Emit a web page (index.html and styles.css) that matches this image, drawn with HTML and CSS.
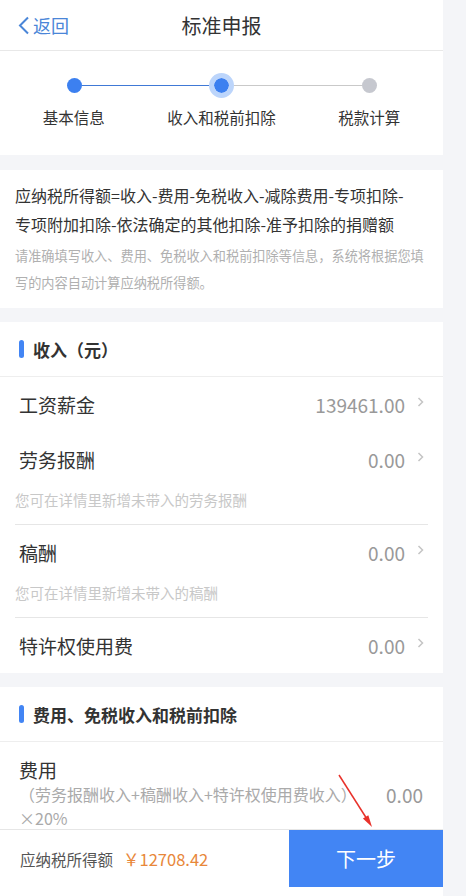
FILE: index.html
```html
<!DOCTYPE html>
<html lang="zh-CN">
<head>
  <meta charset="UTF-8" />
  <meta name="viewport" content="width=device-width, initial-scale=1.0" />
  <title>标准申报</title>
  <link rel="stylesheet" href="styles.css">
</head>
<body>
  <div class="page">
    <div class="header">
      <a class="back" href="#">
        <svg width="13" height="19" viewBox="0 0 13 19"><polyline points="11,1.5 3,9.5 11,17.5" fill="none" stroke="#4a86d8" stroke-width="2"/></svg>
        返回
      </a>
      <div class="title">标准申报</div>
      <div></div>
    </div>

    <div class="steps">
      <div class="track">
        <span class="dot done"></span>
        <span class="line done"></span>
        <span class="dot active"></span>
        <span class="line"></span>
        <span class="dot"></span>
      </div>
      <div class="labels">
        <div>基本信息</div>
        <div>收入和税前扣除</div>
        <div>税款计算</div>
      </div>
    </div>

    <div class="card intro">
      <div class="formula">应纳税所得额=收入-费用-免税收入-减除费用-专项扣除-<br>专项附加扣除-依法确定的其他扣除-准予扣除的捐赠额</div>
      <div class="formula-tip">请准确填写收入、费用、免税收入和税前扣除等信息，系统将根据您填写的内容自动计算应纳税所得额。</div>
    </div>

    <div class="card">
      <div class="card-title"><span class="bar"></span>收入（元）</div>
      <div class="row">
        <span class="label">工资薪金</span>
        <span class="value">139461.00</span>
        <svg class="arrow" width="7" height="10" viewBox="0 0 7 10"><polyline points="1.5,1 5.5,5 1.5,9" fill="none" stroke="#c4c4c4" stroke-width="1.5"/></svg>
      </div>
      <div class="row">
        <span class="label">劳务报酬</span>
        <span class="value">0.00</span>
        <svg class="arrow" width="7" height="10" viewBox="0 0 7 10"><polyline points="1.5,1 5.5,5 1.5,9" fill="none" stroke="#c4c4c4" stroke-width="1.5"/></svg>
      </div>
      <div class="hint">您可在详情里新增未带入的劳务报酬</div>
      <div class="row">
        <span class="label">稿酬</span>
        <span class="value">0.00</span>
        <svg class="arrow" width="7" height="10" viewBox="0 0 7 10"><polyline points="1.5,1 5.5,5 1.5,9" fill="none" stroke="#c4c4c4" stroke-width="1.5"/></svg>
      </div>
      <div class="hint">您可在详情里新增未带入的稿酬</div>
      <div class="row">
        <span class="label">特许权使用费</span>
        <span class="value">0.00</span>
        <svg class="arrow" width="7" height="10" viewBox="0 0 7 10"><polyline points="1.5,1 5.5,5 1.5,9" fill="none" stroke="#c4c4c4" stroke-width="1.5"/></svg>
      </div>
    </div>

    <div class="card">
      <div class="card-title"><span class="bar"></span>费用、免税收入和税前扣除</div>
      <div class="row tall">
        <div class="label-group">
          <div class="label">费用</div>
          <div class="sub">（劳务报酬收入+稿酬收入+特许权使用费收入）×20%</div>
        </div>
        <span class="value">0.00</span>
      </div>
    </div>
  </div>

  <div class="footer">
    <div class="total">应纳税所得额<span class="amount">￥12708.42</span></div>
    <button class="next">下一步</button>
  </div>

  <svg class="mark" width="40" height="58" viewBox="0 0 40 58">
    <line x1="3" y1="3" x2="30" y2="45.5" stroke="#e8322b" stroke-width="1.5"/>
    <polygon points="36,55 26.9,46.6 32.3,43.2" fill="#e8322b"/>
  </svg>
</body>
</html>
```

FILE: styles.css
```css
body {
  margin: 0;
  background: #f4f5f8;
  font-family: "Noto Sans CJK SC", "Noto Sans", sans-serif;
  color: #333;
}
.page {
  width: 443px;
}
.header {
  height: 50px;
  background: #fff;
  border-bottom: 1px solid #e8e8e8;
  display: grid;
  grid-template-columns: 1fr auto 1fr;
  align-items: center;
}
.back {
  display: flex;
  align-items: center;
  gap: 3px;
  padding-left: 17px;
  color: #4a86d8;
  font-size: 18px;
  text-decoration: none;
}
.title {
  font-size: 20px;
  color: #333;
}
.steps {
  background: #fff;
  padding: 22px 0 27px;
}
.track {
  display: flex;
  align-items: center;
  padding: 0 66.5px;
  height: 25px;
}
.dot {
  width: 15px;
  height: 15px;
  border-radius: 50%;
  background: #c6c8cf;
  flex: none;
}
.dot.done {
  background: #3c80f0;
}
.dot.active {
  border: 5px solid #bcd5fb;
  background: #3c80f0;
  background-clip: padding-box;
}
.line {
  flex: 1;
  height: 1.5px;
  background: #c9c9c9;
}
.line.done {
  background: #4079d6;
}
.labels {
  display: grid;
  grid-template-columns: 1fr 1fr 1fr;
  text-align: center;
  font-size: 15.5px;
  line-height: 22px;
  margin-top: 8px;
  color: #333;
}
.card {
  background: #fff;
  margin-top: 14px;
}
.intro {
  margin-top: 15px;
  padding: 11px 15px 12px;
}
.formula {
  font-size: 16px;
  line-height: 28.5px;
  color: #333;
}
.formula-tip {
  margin-top: 4px;
  font-size: 13.2px;
  line-height: 27px;
  color: #b0b0b0;
}
.card-title {
  height: 54px;
  display: flex;
  align-items: center;
  padding-left: 19px;
  font-size: 17px;
  font-weight: bold;
  color: #333;
  border-bottom: 1px solid #eee;
}
.bar {
  width: 5px;
  height: 18px;
  border-radius: 3px;
  background: #4285f4;
  margin-right: 9px;
}
.row {
  height: 55px;
  display: flex;
  align-items: center;
  padding: 0 19px;
}
.label {
  font-size: 19px;
  color: #333;
  line-height: 24px;
}
.value {
  margin-left: auto;
  font-size: 19px;
  color: #999;
}
.arrow {
  margin-left: 12px;
  margin-top: -5px;
}
.hint {
  margin: 0 15px;
  padding: 2px 0 13px;
  font-size: 14.5px;
  line-height: 22px;
  color: #c8c8c8;
  border-bottom: 1px solid #e6e6e6;
}
.row.tall {
  height: auto;
  padding-top: 16px;
  padding-bottom: 40px;
  padding-right: 20px;
}
.label-group {
  flex: 1;
}
.sub {
  font-size: 16px;
  line-height: 24px;
  color: #aaa;
  width: 350px;
}
.footer {
  position: fixed;
  left: 0;
  bottom: 0;
  width: 443px;
  background: #fff;
  border-top: 1px solid #e6e6e6;
  padding-bottom: 9px;
  display: flex;
  align-items: center;
}
.total {
  flex: 1;
  padding-left: 20px;
  font-size: 15.5px;
  color: #555;
}
.amount {
  margin-left: 10px;
  font-size: 16.5px;
  color: #e8873a;
}
.next {
  width: 154px;
  height: 57px;
  border: none;
  background: #4285f4;
  color: #fff;
  font-family: inherit;
  font-size: 20px;
}
.mark {
  position: fixed;
  left: 336px;
  top: 772px;
  z-index: 10;
}
```
